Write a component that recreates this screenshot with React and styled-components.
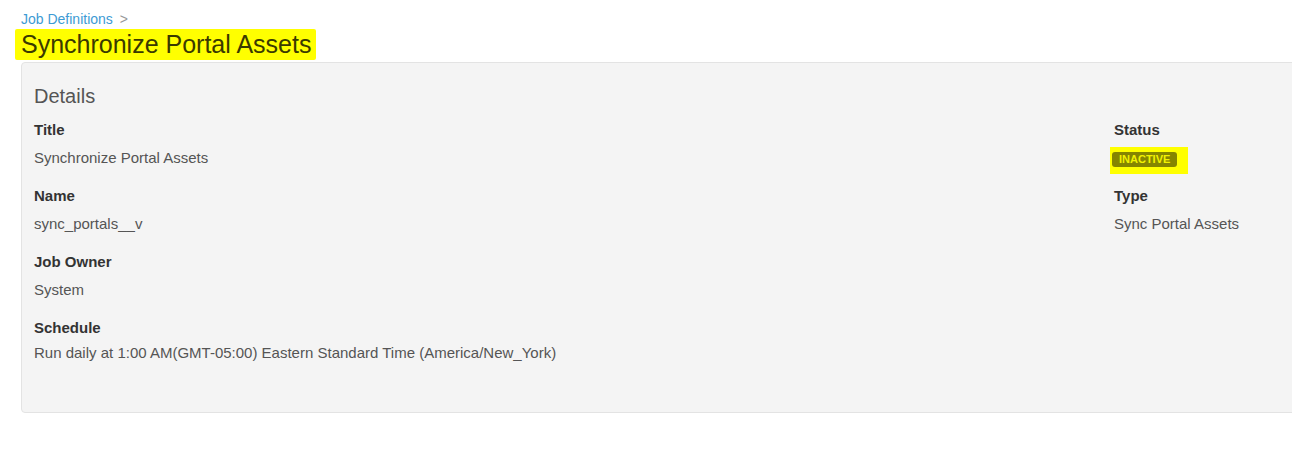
import React from 'react';
import styled, { createGlobalStyle } from 'styled-components';

const GlobalStyle = createGlobalStyle`
  body {
    margin: 0;
    background: #fff;
    font-family: "Liberation Sans", Arial, sans-serif;
    overflow: hidden;
  }
`;

const Page = styled.div`
  padding: 10px 0 0 21px;
`;

const Breadcrumb = styled.div`
  font-size: 14px;
  line-height: 18px;
  color: #999;
  display: flex;
  gap: 7px;
`;

const Crumb = styled.a`
  color: #3d9bd4;
  text-decoration: none;
`;

const Title = styled.h1`
  margin: 1px 0 2px -6px;
  font-size: 25px;
  font-weight: normal;
  line-height: 31px;
  color: #3a3a00;
`;

const Highlight = styled.span`
  display: inline-block;
  background: #ffff00;
  padding: 0 5px 0 6px;
  border-radius: 2px;
`;

const Panel = styled.section`
  width: 1300px;
  height: 351px;
  box-sizing: border-box;
  background: #f4f4f4;
  border: 1px solid #e3e3e3;
  border-radius: 4px;
  padding: 21px 12px;
`;

const Heading = styled.h2`
  margin: 0 0 12px;
  font-size: 20px;
  font-weight: normal;
  line-height: 24px;
  color: #555;
`;

const Columns = styled.div`
  display: grid;
  grid-template-columns: 1080px 1fr;
`;

const Field = styled.div`
  margin-bottom: 18px;
`;

const Label = styled.div`
  font-size: 15px;
  font-weight: bold;
  line-height: 20px;
  color: #333;
`;

const Value = styled.div`
  display: flow-root;
  height: 20px;
  margin-top: ${p => (p.$tight ? 5 : 8)}px;
  font-size: 15px;
  line-height: 20px;
  color: #555;
  white-space: nowrap;
`;

const BadgeMark = styled.span`
  display: block;
  width: fit-content;
  margin: -1px 0 0 -4px;
  padding: 5px 11px 7px 2px;
  background: #ffff00;
`;

const Badge = styled.span`
  display: block;
  background: #858500;
  color: #f2f200;
  font-size: 11px;
  font-weight: bold;
  line-height: 15px;
  padding: 0 7px;
  border-radius: 3px;
`;

export default function App() {
  return (
    <Page>
      <GlobalStyle />
      <Breadcrumb>
        <Crumb href="#">Job Definitions</Crumb>
        <span>&gt;</span>
      </Breadcrumb>
      <Title>
        <Highlight>Synchronize Portal Assets</Highlight>
      </Title>
      <Panel>
        <Heading>Details</Heading>
        <Columns>
          <div>
            <Field>
              <Label>Title</Label>
              <Value>Synchronize Portal Assets</Value>
            </Field>
            <Field>
              <Label>Name</Label>
              <Value>sync_portals__v</Value>
            </Field>
            <Field>
              <Label>Job Owner</Label>
              <Value>System</Value>
            </Field>
            <Field>
              <Label>Schedule</Label>
              <Value $tight>Run daily at 1:00 AM(GMT-05:00) Eastern Standard Time (America/New_York)</Value>
            </Field>
          </div>
          <div>
            <Field>
              <Label>Status</Label>
              <Value>
                <BadgeMark>
                  <Badge>INACTIVE</Badge>
                </BadgeMark>
              </Value>
            </Field>
            <Field>
              <Label>Type</Label>
              <Value>Sync Portal Assets</Value>
            </Field>
          </div>
        </Columns>
      </Panel>
    </Page>
  );
}
